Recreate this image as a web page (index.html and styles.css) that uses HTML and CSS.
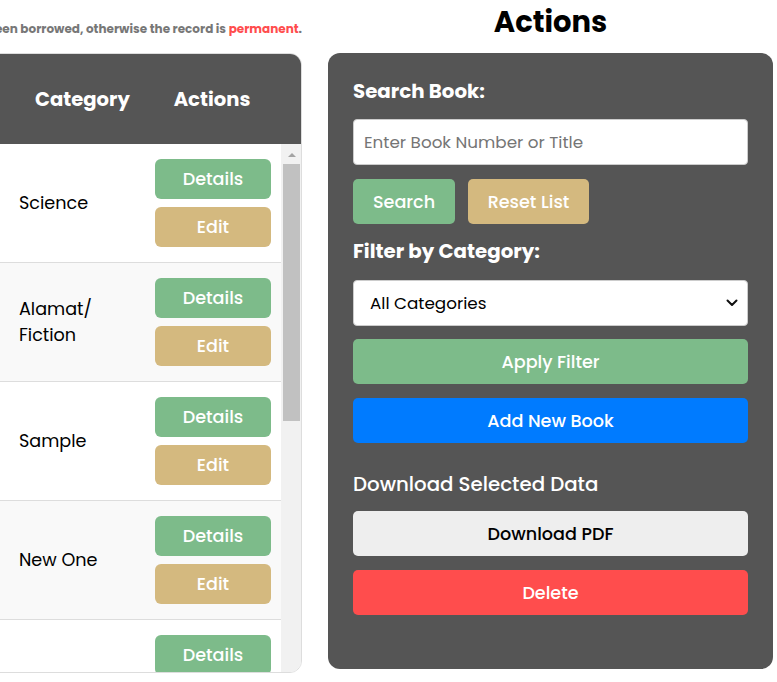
FILE: index.html
```html
<!DOCTYPE html>
<html lang="en">
<head>
<meta charset="utf-8">
<title>Books</title>
<link rel="stylesheet" href="styles.css">
</head>
<body>
<div class="page">
  <section class="list-col">
    <div class="note-row">
      <p class="note">Note: A book can only be deleted if it has never been borrowed, otherwise the record is <span class="red">permanent</span>.</p>
    </div>
    <div class="card">
      <div class="thead">
        <div class="th th-cat">Category</div>
        <div class="th th-act">Actions</div>
        <div class="th-gap"></div>
      </div>
      <div class="tbody">
        <div class="rows">
          <div class="row"><div class="cat">Science</div><div class="acts"><button class="btn-sm green">Details</button><button class="btn-sm tan">Edit</button></div></div>
          <div class="row alt"><div class="cat">Alamat/ Fiction</div><div class="acts"><button class="btn-sm green">Details</button><button class="btn-sm tan">Edit</button></div></div>
          <div class="row"><div class="cat">Sample</div><div class="acts"><button class="btn-sm green">Details</button><button class="btn-sm tan">Edit</button></div></div>
          <div class="row alt"><div class="cat">New One</div><div class="acts"><button class="btn-sm green">Details</button><button class="btn-sm tan">Edit</button></div></div>
          <div class="row"><div class="cat">History</div><div class="acts"><button class="btn-sm green">Details</button><button class="btn-sm tan">Edit</button></div></div>
        </div>
        <div class="vscroll" aria-hidden="true">
          <div class="vs-arrow"></div>
          <div class="vs-thumb"></div>
        </div>
      </div>
    </div>
  </section>

  <section class="side-col">
    <h2 class="side-title">Actions</h2>
    <div class="panel">
      <label class="lbl" for="search">Search Book:</label>
      <input id="search" class="field" type="text" placeholder="Enter Book Number or Title">
      <div class="btn-row">
        <button class="btn green btn-search">Search</button>
        <button class="btn tan btn-reset">Reset List</button>
      </div>
      <label class="lbl lbl-filter" for="cat">Filter by Category:</label>
      <div class="select-wrap">
        <select id="cat" class="field select"><option>All Categories</option></select>
        <svg class="chev" width="12" height="8" viewBox="0 0 12 8"><path d="M1.5 1.5 L6 6 L10.5 1.5" fill="none" stroke="#111" stroke-width="2" stroke-linecap="round" stroke-linejoin="round"/></svg>
      </div>
      <button class="btn green wide btn-apply">Apply Filter</button>
      <button class="btn blue wide btn-add">Add New Book</button>
      <div class="dl-title">Download Selected Data</div>
      <button class="btn light wide btn-pdf">Download PDF</button>
      <button class="btn red-bg wide btn-del">Delete</button>
    </div>
  </section>
</div>
</body>
</html>
```

FILE: styles.css
```css
* { box-sizing: border-box; }
html, body { margin: 0; padding: 0; background: #fff; overflow: hidden; }
body { font-family: "Poppins", "Open Sans", sans-serif; color: #000; }

.page {
  display: flex;
  gap: 26px;
  margin-left: -20px;
  width: 793px;
}

.list-col { width: 322px; flex: none; }
.note-row {
  height: 53px;
  display: flex;
  justify-content: flex-end;
  align-items: flex-start;
  overflow: hidden;
}
.note {
  margin: 20px 0 0;
  white-space: nowrap;
  font-size: 12px;
  font-weight: 700;
  color: #777;
  flex: none;
}
.red { color: #ff4d4d; }

.card {
  border: 1px solid #ddd;
  border-radius: 12px;
  overflow: hidden;
  height: 620px;
  display: flex;
  flex-direction: column;
}
.thead {
  background: #555;
  height: 90px;
  display: grid;
  grid-template-columns: 161px 140px 19px;
  align-items: center;
  color: #fff;
  font-weight: 700;
  font-size: 19.6px;
  flex: none;
}
.th-cat { padding-left: 54px; }
.th-act { text-align: center; }

.tbody {
  flex: 1;
  display: flex;
  min-height: 0;
}
.rows {
  flex: 1;
  overflow: hidden;
}
.vscroll {
  width: 20px;
  flex: none;
  background: #f1f1f1;
  padding: 0 1px 0 2px;
  display: flex;
  flex-direction: column;
  align-items: center;
}
.vs-arrow {
  margin-top: 9px;
  width: 0;
  height: 0;
  border-left: 4px solid transparent;
  border-right: 4px solid transparent;
  border-bottom: 4px solid #a3a3a3;
}
.vs-thumb {
  margin-top: 7px;
  width: 100%;
  height: 257px;
  background: #c1c1c1;
}

.row {
  display: grid;
  grid-template-columns: 161px 140px;
  align-items: center;
  border-bottom: 1px solid #ddd;
  background: #fff;
  padding: 15px 0;
}
.row.alt { background: #f9f9f9; }
.cat {
  padding-left: 38px;
  padding-right: 36px;
  font-size: 17.6px;
  line-height: 26px;
}
.acts {
  display: flex;
  flex-direction: column;
  align-items: center;
  gap: 8px;
  padding-left: 2px;
}
.btn-sm {
  width: 116px;
  height: 40px;
  border: none;
  border-radius: 6px;
  color: #fff;
  font-family: inherit;
  font-size: 17.6px;
  font-weight: 500;
}

.green { background: #7dbb8a; }
.tan { background: #d4b97f; }
.blue { background: #007bff; }
.light { background: #eee; color: #000 !important; }
.red-bg { background: #ff4d4d; }

.side-col { width: 445px; flex: none; }
.side-title {
  margin: 0;
  height: 53px;
  padding-top: 2px;
  text-align: center;
  font-size: 29px;
  line-height: 40px;
  font-weight: 700;
}
.panel {
  background: #555;
  border-radius: 12px;
  padding: 25px 25px 54px;
  display: flex;
  flex-direction: column;
  color: #fff;
}
.lbl {
  font-size: 19.8px;
  font-weight: 700;
  line-height: 27px;
  margin-bottom: 14px;
}
.lbl-filter { margin-top: 14px; margin-bottom: 15px; }
.field {
  width: 100%;
  height: 46px;
  border: 1px solid #ccc;
  border-radius: 4px;
  background: #fff;
  font-family: inherit;
  font-size: 16.8px;
  padding: 0 10px;
  color: #000;
}
.field::placeholder { color: #757575; }
.btn-row { display: flex; gap: 13px; margin-top: 14px; }
.btn {
  height: 45px;
  border: none;
  border-radius: 5px;
  color: #fff;
  font-family: inherit;
  font-size: 17.6px;
  font-weight: 500;
}
.btn-search { width: 102px; }
.btn-reset { width: 121px; }
.select-wrap { position: relative; }
.select {
  appearance: none;
  -webkit-appearance: none;
  padding-left: 16px;
}
.chev { position: absolute; right: 10px; top: 19px; pointer-events: none; }
.wide { width: 100%; }
.btn-apply { margin-top: 13px; }
.btn-add { margin-top: 14px; }
.dl-title {
  margin-top: 28px;
  font-size: 19.8px;
  font-weight: 500;
  line-height: 27px;
}
.btn-pdf { margin-top: 13px; }
.btn-del { margin-top: 14px; }
```
